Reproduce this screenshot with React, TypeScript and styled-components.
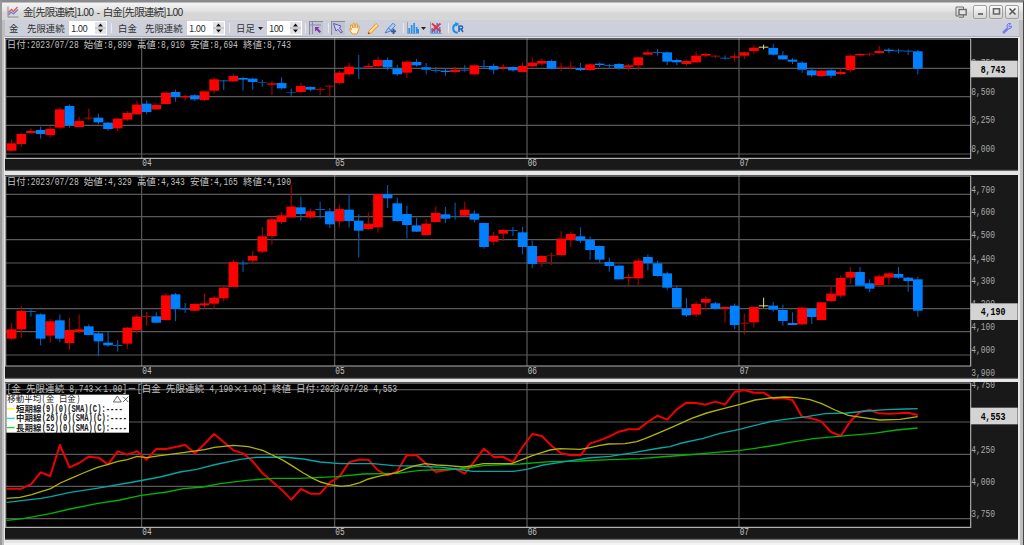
import { ReactNode } from 'react';
import styled, { createGlobalStyle } from 'styled-components';

type Tone = 'r' | 'b' | 'y';
type Candle = [number, number, number, number, Tone];
type Point = [number, number];
type Mark = [string, number];

// chart coordinates are thirds of a pixel
const UNIT = 3;
const LEFT = 15;
const PLOT_LEFT = 18;
const PLOT_RIGHT = 2912;
const PANE_WIDTH = 1013;
const STEP = 28.92;
const CHAR = 14.47;

const tones = { r: '#ff0000', b: '#0080ff', y: '#ffff90' };
const wicks = { r: '#b00000', b: '#0060b8', y: '#d8d878' };

const months: Mark[] = [['04', 425], ['05', 1004], ['06', 1581], ['07', 2217]];

// high, body top, body bottom, low, tone
const parseCandles = (source: string): Candle[] =>
  source
    .trim()
    .split(/\s+/)
    .map((item) => {
      const [high, top, bottom, low, tone] = item.split(',');
      return [Number(high), Number(top), Number(bottom), Number(low), tone as Tone];
    });

const parsePoints = (source: string): Point[] =>
  source
    .trim()
    .split(/\s+/)
    .map((item) => item.split(',').map(Number) as Point);

const goldCandles = parseCandles(`
  310,322,344,347,r 290,294,324,333,r 277,285,291,294,r 272,282,294,308,b 271,279,297,305,r
  214,220,275,277,r 205,210,268,275,b 242,255,273,274,r 218,245,248,252,r 233,245,259,264,b
  258,260,279,284,b 247,248,277,285,r 225,231,251,255,r 195,206,235,236,r 193,203,228,235,b
  200,207,220,222,r 166,170,204,206,r 161,168,183,197,b 177,180,184,194,r 175,178,190,195,b
  164,166,192,195,r 124,130,164,173,r 132,133,136,162,b 113,120,136,137,r 122,126,131,164,b
  125,128,138,162,b 131,139,141,152,b 134,142,146,177,r 124,141,157,160,b 158,168,170,180,b
  141,150,168,170,r 151,153,161,166,b 153,159,162,177,r 147,149,152,182,r 105,110,141,145,r
  80,92,115,122,r 57,95,98,129,b 82,90,94,97,r 62,72,91,93,r 64,72,94,103,b
  86,97,115,120,b 73,77,110,126,r 69,78,88,92,b 81,94,101,115,b 93,102,105,110,b
  97,104,108,119,b 93,101,108,112,r 87,101,104,107,b 85,88,115,118,r 72,90,93,96,b
  83,90,101,115,b 85,93,97,102,r 91,93,103,107,b 80,90,108,110,r 65,80,91,93,r
  67,75,83,90,r 71,75,98,100,b 80,92,95,105,r 77,92,95,100,r 81,97,102,105,b
  84,85,102,105,r 79,83,87,93,b 84,87,90,98,b 81,84,96,102,b 84,88,94,104,r
  62,64,88,103,r 40,49,56,58,r 40,48,51,59,b 47,49,77,87,b 68,72,79,87,b
  71,75,84,89,r 47,59,79,81,r 50,54,59,65,r 56,59,62,66,r 58,65,68,71,b
  51,61,65,77,r 46,49,59,69,r 28,35,45,53,r 26,32,35,40,y 24,36,56,58,b
  46,58,70,72,b 66,71,77,84,b 75,80,101,110,b 95,103,118,124,b 101,104,120,123,r
  100,103,119,126,b 97,108,114,117,r 55,59,102,110,r 51,54,58,63,r 50,53,56,60,r
  30,45,51,54,r 36,41,45,52,b 38,43,46,53,b 41,44,47,57,b 42,46,98,115,b
`);

const platinumCandles = parseCandles(`
  452,472,500,505,r 402,417,472,498,r 412,417,420,434,b 424,427,500,520,b 441,448,491,513,r
  427,445,500,511,b 438,474,513,534,r 427,472,479,483,r 457,463,489,489,b 480,484,508,553,b
  480,512,520,524,b 504,519,522,539,b 465,467,515,530,r 427,434,475,485,r 420,432,435,461,r
  421,433,452,454,b 363,370,444,446,r 363,367,411,447,b 393,410,413,423,b 394,396,416,417,r
  364,394,400,411,r 371,377,395,411,r 344,347,379,388,r 264,270,345,346,r 265,274,277,300,b
  237,252,266,273,r 165,193,239,243,r 137,142,192,218,r 120,130,150,156,r 38,104,136,137,r
  74,106,126,146,b 110,118,136,141,r 89,111,114,140,b 108,118,157,168,b 98,111,148,166,r
  67,113,147,167,b 127,146,176,257,b 121,155,171,174,r 63,67,166,182,r 39,66,79,108,b
  77,94,147,149,b 101,126,159,199,b 138,160,179,180,b 141,155,189,191,r 103,123,150,151,r
  105,127,140,153,b 92,132,134,143,b 89,113,131,133,r 115,125,143,152,b 152,153,225,230,b
  180,191,209,220,r 172,174,185,207,r 165,174,177,192,b 165,181,225,247,b 206,222,276,289,b
  251,252,270,285,r 242,249,251,279,r 177,200,249,254,r 179,186,204,225,r 166,193,206,213,b
  194,203,234,263,b 220,222,263,273,b 257,270,282,299,b 278,281,322,322,b 306,315,319,344,r
  259,266,319,339,r 247,255,274,296,b 266,274,312,314,b 299,304,347,355,b 342,348,407,409,b
  378,410,430,435,b 387,396,428,434,r 373,381,392,416,r 390,394,410,413,b 403,405,410,452,r
  395,401,459,471,b 425,452,455,487,r 404,405,451,466,r 377,400,403,407,y 390,401,413,419,b
  398,414,447,461,b 421,453,459,460,b 405,407,457,459,r 408,410,435,456,b 390,391,444,445,r
  344,365,387,389,r 310,318,371,378,r 285,300,317,336,r 285,300,341,343,b 322,334,350,361,b
  307,313,339,341,r 303,304,317,338,r 285,306,317,320,b 315,317,327,359,b 314,322,416,434,b
`);

const spread = [
  341, 341, 328, 292, 303, 210, 277, 264, 245, 248, 268, 229, 239, 229, 254, 222, 222, 216, 210, 235, 207, 177, 201,
  226, 235, 259, 294, 319, 344, 374, 342, 356, 356, 323, 305, 262, 254, 254, 286, 301, 289, 240, 241, 266, 291, 286,
  281, 296, 259, 221, 246, 246, 261, 216, 177, 183, 212, 235, 241, 241, 205, 196, 184, 170, 163, 163, 141, 122, 134,
  103, 83, 84, 89, 80, 89, 51, 45, 53, 53, 71, 69, 75, 126, 130, 140, 171, 183, 139, 111, 105, 115, 116, 115, 113, 120,
];

const shortLine = parsePoints(`
  20,370 60,367 95,359 123,350 152,341 181,324 211,311 250,294 290,278 325,268 354,259 382,254 411,244 441,248
  480,242 528,236 570,230 614,224 643,217 700,211 745,215 788,226 817,240 850,256 880,275 910,294 940,311 962,321
  989,329 1025,334 1050,331 1080,323 1105,312 1135,304 1160,299 1190,293 1220,280 1250,271 1275,266 1310,270
  1345,272 1390,276 1420,272 1450,266 1535,266 1560,256 1597,242 1625,233 1650,225 1680,221 1740,223 1770,218
  1800,211 1825,207 1875,206 1910,200 1935,191 1980,172 2020,155 2075,130 2120,114 2170,101 2220,88 2265,75
  2310,69 2355,66 2390,68 2430,74 2465,86 2505,105 2545,121 2590,128 2640,135 2700,133 2753,125
`);

const middleLine = parsePoints(`
  20,382 123,370 152,365 211,352 290,340 400,321 480,306 540,291 590,283 640,270 720,253 770,247 850,246 910,252
  960,261 1020,266 1120,266 1180,272 1250,273 1330,277 1390,285 1420,289 1540,289 1580,283 1630,270 1700,259
  1765,249 1830,244 1900,233 1980,219 2010,215 2045,204 2110,190 2160,175 2215,164 2310,140 2350,134 2420,125
  2475,116 2540,114 2600,108 2660,104 2720,102 2753,101
`);

const longLine = parsePoints(`
  20,436 70,431 150,416 210,402 290,386 360,375 420,362 500,351 550,341 610,336 660,326 740,316 820,310 900,310
  1010,305 1090,297 1190,295 1260,286 1380,282 1450,272 1560,267 1650,260 1740,258 1830,254 1920,251 1980,246
  2060,240 2150,232 2215,227 2265,220 2330,210 2370,202 2440,191 2540,182 2620,175 2690,165 2753,159
`);

const centerOf = (index: number) => 35 + index * STEP;

type GridTextProps = {
  x: number;
  y: number;
  text: string;
  char?: number;
  size?: number;
  fill?: string;
  bold?: boolean;
};

// keeps kanji two cells wide and latin one cell wide
function GridText({ x, y, text, char = CHAR, size = 29, fill = '#c0c0c0', bold }: GridTextProps) {
  const runs = text.match(/[\x21-\x7e]+|[^\x00-\x7e]+|\s+/g) || [];
  let cursor = x;

  return (
    <g fill={fill} fontWeight={bold ? 700 : 400}>
      {runs.map((run, i) => {
        const isWide = run.charCodeAt(0) > 0x7e;
        const start = cursor;
        const width = run.length * char * (isWide ? 2 : 1);
        cursor += width;
        if (!run.trim()) return null;

        return isWide ? (
          <KanjiText key={i} x={start} y={y} fontSize={size} textLength={width - 1} lengthAdjust="spacingAndGlyphs">
            {run}
          </KanjiText>
        ) : (
          <MonoText key={i} x={start} y={y} fontSize={size * 1.2} textLength={width - 1} lengthAdjust="spacingAndGlyphs">
            {run}
          </MonoText>
        );
      })}
    </g>
  );
}

type ChartPaneProps = {
  height: number;
  top: number;
  bottom: number;
  header: string;
  headerY: number;
  lines: number[];
  scale: Mark[];
  price: string;
  priceY: number;
  children: ReactNode;
};

function ChartPane({ height, top, bottom, header, headerY, lines, scale, price, priceY, children }: ChartPaneProps) {
  return (
    <StyledPane $height={height} viewBox={`${LEFT} ${top} ${PANE_WIDTH * UNIT} ${height * UNIT}`}>
      <rect x={LEFT} y={top} width={PANE_WIDTH * UNIT} height={height * UNIT} fill="#191919" />
      <rect x={LEFT} y={top} width={PLOT_RIGHT - LEFT} height={bottom - top} fill="#000" />
      {lines.map((y) => (
        <line key={y} x1={PLOT_LEFT} x2={PLOT_RIGHT} y1={y} y2={y} stroke="#5a5a5a" strokeWidth="3.4" />
      ))}
      {months.map(([label, x]) => (
        <g key={label}>
          <line x1={x} x2={x} y1={top} y2={bottom} stroke="#5e5e5e" strokeWidth="3.4" />
          <GridText x={x + 2} y={bottom + 23} text={label} />
        </g>
      ))}
      {children}
      <GridText x={20} y={headerY} text={header} />
      <path
        d={`M${LEFT + 2} ${bottom}V${top + 3}H${PLOT_RIGHT}V${bottom}Z`}
        fill="none"
        stroke="#b0b0b0"
        strokeWidth="3.4"
      />
      {scale.map(([label, y]) => (
        <GridText key={label} x={2914} y={y + 11} text={label} fill="#a8a8a8" />
      ))}
      <rect x={PLOT_RIGHT} y={priceY - 25} width="141" height="50" fill="#d4d4d4" />
      <GridText x={2942} y={priceY + 11} text={price} char={15.1} fill="#000" bold />
      <path d={`M${LEFT} ${top + height * UNIT - 2}h${PANE_WIDTH * UNIT}`} stroke="#777" strokeWidth="3" />
    </StyledPane>
  );
}

function Candles({ data }: { data: Candle[] }) {
  return (
    <>
      {data.map(([high, top, bottom, low, tone], i) => {
        const x = centerOf(i);
        const thin = bottom - top < 4;
        return (
          <g key={i}>
            <rect x={x - 1.6} y={high} width="3.2" height={low - high} fill={wicks[tone]} />
            <rect x={x - 14.5} y={top} width="29" height={bottom - top} fill={thin ? wicks[tone] : tones[tone]} />
          </g>
        );
      })}
    </>
  );
}

function Average({ points, color }: { points: Point[]; color: string }) {
  return <polyline points={points.join(' ')} fill="none" stroke={color} strokeWidth="4" />;
}

const legendRows = [
  { label: '短期線(9)(0)(SMA)(C):----', color: '#ffff00', y: 101 },
  { label: '中期線(26)(0)(SMA)(C):----', color: '#00e0e0', y: 130 },
  { label: '長期線(52)(0)(SMA)(C):----', color: '#00e000', y: 158 },
];

function Legend() {
  return (
    <g>
      <rect x="19" y="59" width="368" height="114" fill="#fff" />
      <GridText x={22} y={82} text="移動平均(金 白金)" char={12.9} size={26} fill="#202020" />
      <path d="M352 63L364 81H340ZM369 65L385 81M385 65L369 81" fill="none" stroke="#444" strokeWidth="2.4" />
      {legendRows.map(({ label, color, y }) => (
        <g key={label}>
          <line x1="21" x2="44" y1={y} y2={y} stroke={color} strokeWidth="3.5" />
          <GridText x={48} y={y + 9} text={label} char={12.85} size={25} fill="#202020" bold />
        </g>
      ))}
    </g>
  );
}

function Spinner({ value, width }: { value: string; width: number }) {
  return (
    <StyledSpinner $width={width}>
      <span>{value}</span>
      <svg width="11" height="12" viewBox="0 0 11 12">
        <rect width="11" height="12" fill="#e4e4e6" />
        <path d="M0 6h11" stroke="#b4b4ba" />
        <path d="M3 4.5L5.5 1.5L8 4.5ZM3 7.5L5.5 10.5L8 7.5Z" fill="#101010" />
      </svg>
    </StyledSpinner>
  );
}

export default function App() {
  const spreadPoints = ['20,341', ...spread.map((y, i) => `${centerOf(i)},${y}`)].join(' ');

  return (
    <>
      <GlobalStyle />
      <StyledWindow>
        <StyledTitleBar>
          <svg width="12" height="12" viewBox="0 0 12 12" fill="none">
            <path d="M1 .5V11H11.5" stroke="#8c8c94" />
            <path d="M1.5 9L4 6L6.5 8L11 3.5" stroke="#6080d0" strokeWidth="1.2" />
            <path d="M1.5 6.5L4.5 3.5L6.5 5.5L10.5 1" stroke="#f05060" strokeWidth="1.3" />
          </svg>
          <StyledTitle>金[先限連続]1.00 - 白金[先限連続]1.00</StyledTitle>
          <StyledWindowButtons>
            <StyledDock width="12" height="12" viewBox="0 0 12 12" fill="none" stroke="#6c6c6c">
              <path d="M4 10H1V1H8.5V3" />
              <rect x="4" y="3.5" width="7.2" height="5.3" fill="#e4e4e4" strokeWidth="1.4" />
              <path d="M4 11.2H8.5V9" />
            </StyledDock>
            <StyledWindowButton>
              <svg width="9" height="9" viewBox="0 0 9 9">
                <path d="M2 7H7" stroke="#555" strokeWidth="1.6" />
              </svg>
            </StyledWindowButton>
            <StyledWindowButton>
              <svg width="9" height="9" viewBox="0 0 9 9">
                <path d="M1.5 1.8H7.5V7H1.5Z" fill="none" stroke="#666" strokeWidth="1.6" />
              </svg>
            </StyledWindowButton>
            <StyledWindowButton>
              <svg width="9" height="9" viewBox="0 0 9 9">
                <path d="M1.5 1.5L7.5 7.5M7.5 1.5L1.5 7.5" stroke="#555" strokeWidth="1.5" />
              </svg>
            </StyledWindowButton>
          </StyledWindowButtons>
        </StyledTitleBar>

        <StyledToolbar>
          <StyledLabel $width={18}>金</StyledLabel>
          <StyledLabel $width={42}>先限連続</StyledLabel>
          <Spinner value="1.00" width={38} />
          <StyledDivider $before={4} $after={6} />
          <StyledLabel $width={27}>白金</StyledLabel>
          <StyledLabel $width={42}>先限連続</StyledLabel>
          <Spinner value="1.00" width={38} />
          <StyledDivider $before={4} $after={6} />
          <StyledLabel $width={21}>日足</StyledLabel>
          <svg width="10" height="12" viewBox="0 0 10 12">
            <path d="M1 5H6L3.5 8Z" fill="#222" />
          </svg>
          <Spinner value="100" width={35} />
          <StyledDivider $before={3} $after={3} />
          <StyledTool $width={14} $pressed>
            <svg width="12" height="12" viewBox="0 0 12 12" fill="none">
              <path d="M0 3H11M2.5 0V12" stroke="#8c88b8" />
              <path d="M5 5H9.5L8 6.5L11 9.5L9.5 11L6.5 8L5 9.5Z" fill="#8038a8" />
            </svg>
          </StyledTool>
          <StyledDivider $before={5} $after={2} />
          <StyledTool $width={14} $pressed>
            <svg width="12" height="12" viewBox="0 0 12 12">
              <path d="M1.5 1.5L9 4L7.5 6L10.5 10L9 11L5.8 7.2L4 9Z" fill="#c8ccff" stroke="#6058b0" />
            </svg>
          </StyledTool>
          <StyledTool $width={19}>
            <svg width="13" height="13" viewBox="0 0 13 13">
              <path
                d="M4.5 12L1 7.4Q1.5 6.2 3.4 7.7L2.3 3Q3 2 3.8 3L5 6L4.9 1.6Q5.7 .6 6.5 1.6L7 5.7L8 2Q8.9 1.3 9.5 2.3L9 6L10.3 4Q11.3 3.7 11.3 4.8L10 9.5L8.7 12Z"
                fill="#fff0c8"
                stroke="#d89030"
                strokeWidth=".9"
              />
            </svg>
          </StyledTool>
          <StyledTool $width={18}>
            <svg width="13" height="13" viewBox="0 0 13 13">
              <path d="M1 12L2 9L9 1.5L11.5 3.8L4.2 11Z" fill="#ffd070" stroke="#e09028" strokeWidth=".9" />
              <path d="M3 9.5L10 2.5" stroke="#fff4b8" />
              <path d="M1 12L1.7 10L3 11.4Z" fill="#704018" />
            </svg>
          </StyledTool>
          <StyledTool $width={17}>
            <svg width="13" height="13" viewBox="0 0 13 13">
              <path d="M1 11L4 6.5L9 1.2L11.3 3.5L6.5 9Z" fill="#a8d0f8" stroke="#4c80c8" />
              <path d="M4.5 6L7.5 9" stroke="#446ca8" />
              <path d="M9.5 6.8V12M6.9 9.4H12.1" stroke="#3458a0" strokeWidth="1.9" />
            </svg>
          </StyledTool>
          <StyledDivider $before={4} $after={2} />
          <StyledTool $width={14}>
            <svg width="12" height="12" viewBox="0 0 12 12">
              <path d="M.5 0V11.5H12" stroke="#90a0b8" fill="none" />
              <path d="M2.2 11V6M4.7 11V3M7.2 11V1M9.7 11V5M11.3 11V7" stroke="#2890f0" strokeWidth="1.7" />
            </svg>
          </StyledTool>
          <svg width="7" height="12" viewBox="0 0 7 12">
            <path d="M1 5H6L3.5 8Z" fill="#222" />
          </svg>
          <StyledTool $width={17}>
            <svg width="12" height="12" viewBox="0 0 12 12">
              <path d="M.5 0V11.5H12" stroke="#90a0b8" fill="none" />
              <path d="M2.2 11V6M4.7 11V3M7.2 11V1M9.7 11V5" stroke="#2890f0" strokeWidth="1.7" />
              <path d="M2 1.5L10.5 9.5M10.5 1.5L2 9.5" stroke="#f03040" strokeWidth="1.8" />
            </svg>
          </StyledTool>
          <StyledDivider $before={4} $after={1} />
          <StyledTool $width={15}>
            <svg width="12" height="12" viewBox="0 0 12 12" fill="none">
              <path d="M4 2.2Q1.2 3.2 1.2 6.2Q1.3 10.5 5.8 10.8" stroke="#1890e8" strokeWidth="2" />
              <path d="M3 0L7.3 1.8L4.2 4.5Z" fill="#1890e8" />
              <path d="M7 10V4H9.3Q10.6 4 10.6 5.4Q10.6 7 9 7H7M9 7L11 10" stroke="#2060c0" strokeWidth="1.5" />
            </svg>
          </StyledTool>
          <StyledSettings width="12" height="13" viewBox="0 0 12 13">
            <path d="M2 11L6.8 6.5" stroke="#7878f0" strokeWidth="2.6" />
            <path d="M9.8 1.7L7.7 3.6L8.6 5L10.8 4.1Q10.4 7 7.7 6.8Q5.2 5.5 6 3Q7.2 .6 9.8 1.7" fill="#c8c8ff" stroke="#7070e8" />
          </StyledSettings>
        </StyledToolbar>

        <StyledCharts>
          <ChartPane
            height={133}
            top={6}
            bottom={367}
            header="日付:2023/07/28 始値:8,899 高値:8,910 安値:8,694 終値:8,743"
            headerY={36}
            lines={[97, 182, 268, 354]}
            scale={[['8,750', 80], ['8,500', 166], ['8,250', 251], ['8,000', 338]]}
            price="8,743"
            priceY={99}
          >
            <Candles data={goldCandles} />
          </ChartPane>
          <ChartPane
            height={204}
            top={9}
            bottom={582}
            header="日付:2023/07/28 始値:4,329 高値:4,343 安値:4,165 終値:4,190"
            headerY={39}
            lines={[67, 134, 203, 273, 342, 410, 479, 549]}
            scale={[
              ['4,700', 51],
              ['4,600', 119],
              ['4,500', 188],
              ['4,400', 258],
              ['4,300', 326],
              ['4,200', 394],
              ['4,100', 463],
              ['4,000', 533],
              ['3,900', 602],
            ]}
            price="4,190"
            priceY={419}
          >
            <Candles data={platinumCandles} />
          </ChartPane>
          <ChartPane
            height={158}
            top={21}
            bottom={457}
            header="[金 先限連続 8,743×1.00]－[白金 先限連続 4,190×1.00] 終値 日付:2023/07/28 4,553"
            headerY={52}
            lines={[44, 141, 238, 334, 431]}
            scale={[['4,750', 29], ['4,250', 222], ['4,000', 318], ['3,750', 415]]}
            price="4,553"
            priceY={123}
          >
            <polyline points={spreadPoints} fill="none" stroke="#f00000" strokeWidth="6" strokeLinejoin="round" />
            <Average points={longLine} color="#00b400" />
            <Average points={middleLine} color="#00a8a8" />
            <Average points={shortLine} color="#b4b400" />
            <Legend />
          </ChartPane>
        </StyledCharts>
      </StyledWindow>
    </>
  );
}

const GlobalStyle = createGlobalStyle`
  body {
    margin: 0;
    overflow: hidden;
    background: #8c8c90;
  }
`;

const StyledWindow = styled.div`
  box-sizing: border-box;
  display: flex;
  flex-direction: column;
  width: 1024px;
  height: 545px;
  padding-top: 1px;
  border-top: 2px solid #8b8b8f;
  border-left: 2px solid #98989a;
  border-right: 1px solid #4c4446;
  background: #bebebe;
  color: #303030;
  font-family: 'Noto Sans CJK JP', sans-serif;
`;

const StyledTitleBar = styled.div`
  flex: none;
  display: flex;
  align-items: center;
  height: 17px;
  padding: 0 4px 0 5px;
  background: linear-gradient(#f3f3f3 0%, #e6e6e6 40%, #d6d6d6 60%, #d6d6d6 100%);
`;

const StyledTitle = styled.div`
  margin-left: 4px;
  font-size: 10.5px;
  line-height: 16px;
  letter-spacing: -0.9px;
  word-spacing: 2px;
  white-space: pre;
`;

const StyledWindowButtons = styled.div`
  display: flex;
  align-items: center;
  gap: 2px;
  margin-left: auto;
`;

const StyledDock = styled.svg`
  margin-right: 4px;
`;

const StyledWindowButton = styled.div`
  box-sizing: border-box;
  display: flex;
  align-items: center;
  justify-content: center;
  width: 14px;
  height: 14px;
  border: 1px solid #a0a0a0;
  border-radius: 2px;
  background: linear-gradient(#fafafa, #d4d4d4);
`;

const StyledToolbar = styled.div`
  box-sizing: border-box;
  flex: none;
  display: flex;
  align-items: center;
  height: 17px;
  margin-left: 3px;
  margin-right: 4px;
  padding-left: 4px;
  border-bottom: 1px solid #a6adc0;
  background: #cdd0da;

  svg {
    flex: none;
  }
`;

const StyledLabel = styled.div<{ $width: number }>`
  flex: none;
  width: ${({ $width }) => $width}px;
  font-size: 9.4px;
  line-height: 14px;
  white-space: nowrap;
`;

const StyledSpinner = styled.div<{ $width: number }>`
  box-sizing: border-box;
  flex: none;
  display: flex;
  align-items: center;
  justify-content: space-between;
  width: ${({ $width }) => $width}px;
  height: 14px;
  padding: 0 1px 0 2px;
  background: #fff;
  font-size: 9.5px;
  line-height: 12px;
  letter-spacing: -0.6px;
`;

const StyledDivider = styled.div<{ $before: number; $after: number }>`
  flex: none;
  width: 1px;
  height: 10px;
  margin: 0 ${({ $after }) => $after}px 0 ${({ $before }) => $before}px;
  background: #e8eaf0;
`;

const StyledTool = styled.div<{ $width: number; $pressed?: boolean }>`
  box-sizing: border-box;
  flex: none;
  display: flex;
  align-items: center;
  justify-content: center;
  width: ${({ $width }) => $width}px;
  height: 14px;
  background: ${({ $pressed }) => ($pressed ? '#c2c4d0' : 'transparent')};
  box-shadow: ${({ $pressed }) => ($pressed ? 'inset 1px 1px 0 #8a8c98' : 'none')};
`;

const StyledSettings = styled.svg`
  margin-left: auto;
  margin-right: 6px;
`;

const StyledCharts = styled.div`
  flex: none;
  display: grid;
  grid-template-rows: 134px 204px 158px;
  align-content: start;
  row-gap: 3px;
  margin: 0 3px 0 2px;
  padding: 1px 1px 3px 1px;
  background: #e6e6e6;
  border-bottom: 2px solid #f4f4f4;
`;

const StyledPane = styled.svg<{ $height: number }>`
  display: block;
  width: 1013px;
  height: ${({ $height }) => $height}px;
`;

const KanjiText = styled.text`
  font-family: 'Noto Sans CJK JP', sans-serif;
`;

const MonoText = styled.text`
  font-family: 'Liberation Mono', monospace;
`;
